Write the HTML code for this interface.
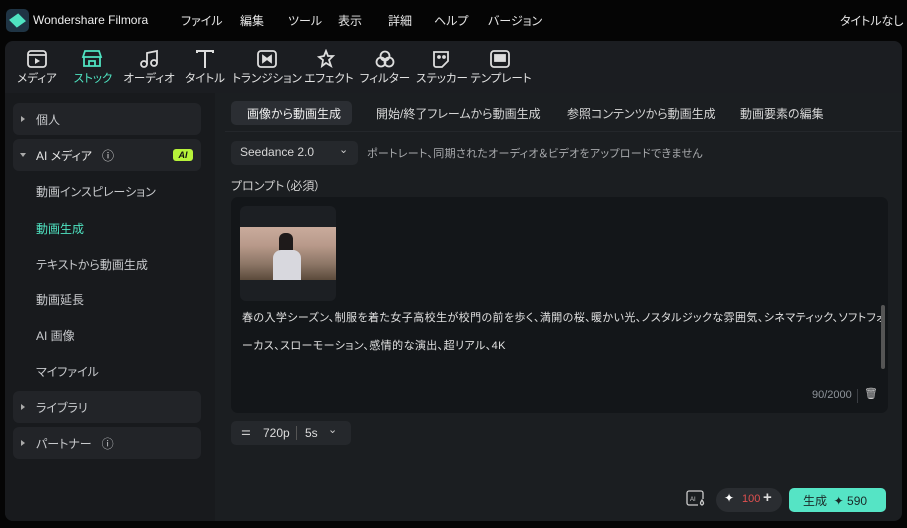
<!DOCTYPE html>
<html><head><meta charset="utf-8"><style>
*{box-sizing:border-box;margin:0;padding:0}
body{width:907px;height:528px;background:#050505;font-family:"Liberation Sans","Noto Sans CJK JP",sans-serif;color:#d0d2d6;font-size:12px;position:relative;overflow:hidden;font-feature-settings:"palt";white-space:nowrap}
.a{position:absolute}
.menu span{position:absolute;top:12px;font-size:12px;color:#e6e6e6}
.tb{position:absolute;left:5px;top:41px;width:897px;height:52px;background:#1b1d21;border-radius:8px 8px 0 0}
.ti{position:absolute;top:70px;font-size:11.5px;color:#e2e2e2;text-align:center;width:70px}
.ic{position:absolute;top:49px}
.body{position:absolute;left:5px;top:93px;width:897px;height:428px;background:#1b1e21;border-radius:0 0 8px 8px}
.side{position:absolute;left:5px;top:93px;width:210px;height:428px;background:#181a1d;border-radius:0 0 0 8px}
.grp{position:absolute;left:13px;width:188px;height:32px;background:#222428;border-radius:6px;font-size:12px;color:#c8cacd}
.grp i{position:absolute;left:8px;top:13px;border-left:4px solid #aaa;border-top:3px solid transparent;border-bottom:3px solid transparent}
.grp b{font-weight:normal;position:absolute;left:23px;top:8px}
.it{position:absolute;left:36px;font-size:12px;color:#c8cacd}
.tab{position:absolute;top:105px;font-size:12px;color:#d6d6d6}
</style></head><body>
<div class="a" style="left:6px;top:9px;width:23px;height:23px;background:#1f3444;border-radius:5px"></div>
<div class="a" style="left:12px;top:15px;width:11px;height:11px;background:#4fe3c1;transform:rotate(45deg) skewX(-10deg)"></div>
<div class="a" style="left:33px;top:13px;font-size:12px;color:#eee">Wondershare Filmora</div>
<div class="menu"><span style="left:181px">ファイル</span><span style="left:240px">編集</span><span style="left:288px">ツール</span><span style="left:338px">表示</span><span style="left:388px">詳細</span><span style="left:434px">ヘルプ</span><span style="left:488px">バージョン</span><span style="left:840px">タイトルなし</span></div>
<div class="tb"></div>
<svg class="ic" style="left:26px" width="22" height="20" viewBox="0 0 22 20" fill="none" stroke="#ddd" stroke-width="1.8"><rect x="2" y="2" width="18" height="16" rx="3"/><path d="M2 6h18"/><path d="M9 9l5 3-5 3z" fill="#ddd" stroke="none"/></svg>
<svg class="ic" style="left:81px" width="22" height="20" viewBox="0 0 22 20" fill="none" stroke="#4fe3c1" stroke-width="1.8"><path d="M3 8V17h16V8M2 8l2-6h14l2 6zM8 17v-5h6v5"/></svg>
<svg class="ic" style="left:138px" width="22" height="20" viewBox="0 0 22 20" fill="none" stroke="#ddd" stroke-width="1.8"><circle cx="6" cy="15" r="3"/><circle cx="16" cy="14" r="3"/><path d="M9 15V4l10-2v12"/></svg>
<svg class="ic" style="left:194px" width="22" height="20" viewBox="0 0 22 20" fill="none" stroke="#ddd" stroke-width="2"><path d="M3 4V2h16v2M11 2v17"/></svg>
<svg class="ic" style="left:256px" width="22" height="20" viewBox="0 0 22 20" fill="none" stroke="#ddd" stroke-width="1.8"><rect x="2" y="2" width="18" height="16" rx="3"/><path d="M7 7l4 3-4 3zM15 7l-4 3 4 3z" fill="#ddd"/></svg>
<svg class="ic" style="left:317px" width="22" height="20" viewBox="0 0 22 20" fill="none" stroke="#ddd" stroke-width="1.8"><path d="M9 2l2 5 5 0-4 4 2 6-5-3-4 3 1-6-4-3 5-1z"/></svg>
<svg class="ic" style="left:374px" width="22" height="20" viewBox="0 0 22 20" fill="none" stroke="#ddd" stroke-width="1.8"><circle cx="11" cy="7" r="4.5"/><circle cx="7" cy="13" r="4.5"/><circle cx="15" cy="13" r="4.5"/></svg>
<svg class="ic" style="left:430px" width="22" height="20" viewBox="0 0 22 20" fill="none" stroke="#ddd" stroke-width="1.8"><path d="M4 3h14v9l-6 6H6a2 2 0 0 1-2-2z"/><circle cx="9" cy="8" r="1" fill="#ddd"/><circle cx="14" cy="8" r="1" fill="#ddd"/></svg>
<svg class="ic" style="left:489px" width="22" height="20" viewBox="0 0 22 20" fill="none" stroke="#ddd" stroke-width="1.8"><rect x="2" y="2" width="18" height="16" rx="3"/><rect x="6" y="6" width="10" height="6" fill="#ddd"/></svg>
<div class="ti" style="left:2px">メディア</div>
<div class="ti" style="left:58px;color:#4fe3c1">ストック</div>
<div class="ti" style="left:114px">オーディオ</div>
<div class="ti" style="left:170px">タイトル</div>
<div class="ti" style="left:232px">トランジション</div>
<div class="ti" style="left:294px">エフェクト</div>
<div class="ti" style="left:350px">フィルター</div>
<div class="ti" style="left:407px">ステッカー</div>
<div class="ti" style="left:466px">テンプレート</div>
<div class="body"></div>
<div class="side"></div>
<div class="grp" style="top:103px"><i></i><b style="left:23px">個人</b></div>
<div class="grp" style="top:139px;height:32px"><i style="border-left:3px solid transparent;border-right:3px solid transparent;border-top:4px solid #aaa;border-bottom:0;top:14px;left:7px"></i><b style="color:#e4e4e4">AI メディア &nbsp; ⓘ</b><span class="a" style="left:160px;top:10px;width:20px;height:12px;background:#b7f23a;border-radius:3px;color:#111;font-size:9px;font-weight:bold;font-style:italic;text-align:center;line-height:12px">AI</span></div>
<div class="it" style="top:183px">動画インスピレーション</div>
<div class="it" style="top:220px;color:#4fe3c1">動画生成</div>
<div class="it" style="top:256px">テキストから動画生成</div>
<div class="it" style="top:291px">動画延長</div>
<div class="it" style="top:327px">AI 画像</div>
<div class="it" style="top:363px">マイファイル</div>
<div class="grp" style="top:391px"><i></i><b>ライブラリ</b></div>
<div class="grp" style="top:427px"><i></i><b>パートナー &nbsp; ⓘ</b></div>
<div class="a" style="left:231px;top:101px;width:121px;height:24px;background:#2b2e33;border-radius:5px"></div>
<div class="tab" style="left:247px;color:#f0f0f0">画像から動画生成</div>
<div class="tab" style="left:376px">開始/終了フレームから動画生成</div>
<div class="tab" style="left:567px">参照コンテンツから動画生成</div>
<div class="tab" style="left:740px">動画要素の編集</div>
<div class="a" style="left:225px;top:131px;width:677px;height:1px;background:#24272b"></div>
<div class="a" style="left:231px;top:141px;width:127px;height:24px;background:#25282c;border-radius:5px"></div>
<div class="a" style="left:240px;top:145px;color:#d6d6d6">Seedance 2.0</div>
<div class="a" style="left:339px;top:143px;color:#ccc;font-size:11px">⌄</div>
<div class="a" style="left:367px;top:145px;color:#a8aaad;font-size:11px;letter-spacing:0.3px">ポートレート、同期されたオーディオ＆ビデオをアップロードできません</div>
<div class="a" style="left:231px;top:177px;color:#d0d0d0">プロンプト（必須）</div>
<div class="a" style="left:231px;top:197px;width:657px;height:216px;background:#131619;border-radius:7px"></div>
<div class="a" style="left:240px;top:206px;width:96px;height:95px;background:#1c1f23;border-radius:6px"></div>
<div class="a" style="left:240px;top:227px;width:96px;height:53px;background:linear-gradient(180deg,#c9ab9c 0%,#b8998a 35%,#8c7666 70%,#5b4a3b 100%)"></div>
<div class="a" style="left:279px;top:233px;width:14px;height:20px;background:#1e1a1a;border-radius:6px 6px 2px 2px"></div>
<div class="a" style="left:273px;top:250px;width:28px;height:30px;background:#d8d8de;border-radius:8px 8px 0 0"></div>
<div class="a" style="left:242px;top:309px;color:#e0e0e0;font-size:11px;letter-spacing:0.42px">春の入学シーズン、制服を着た女子高校生が校門の前を歩く、満開の桜、暖かい光、ノスタルジックな雰囲気、シネマティック、ソフトフォ</div>
<div class="a" style="left:242px;top:337px;color:#e0e0e0;font-size:11px;letter-spacing:0.42px">ーカス、スローモーション、感情的な演出、超リアル、4K</div>
<div class="a" style="left:881px;top:305px;width:4px;height:64px;background:#555;border-radius:2px"></div>
<div class="a" style="left:812px;top:389px;color:#8e949a;font-size:11px">90/2000</div>
<div class="a" style="left:857px;top:389px;width:1px;height:14px;background:#3a3d42"></div>
<div class="a" style="left:864px;top:387px;color:#ccc;font-size:11px">🗑</div>
<div class="a" style="left:231px;top:421px;width:120px;height:24px;background:#25282c;border-radius:5px"></div>
<div class="a" style="left:241px;top:425px;color:#ccc;font-size:11px">⚌</div>
<div class="a" style="left:263px;top:426px;color:#ddd">720p</div>
<div class="a" style="left:296px;top:426px;width:1px;height:14px;background:#555"></div>
<div class="a" style="left:305px;top:426px;color:#ddd">5s</div>
<div class="a" style="left:328px;top:423px;color:#ccc;font-size:11px">⌄</div>
<svg class="a" style="left:686px;top:490px" width="20" height="18" viewBox="0 0 20 18" fill="none" stroke="#ccc" stroke-width="1.3"><path d="M12 15H3a2 2 0 0 1-2-2V3a2 2 0 0 1 2-2h12a2 2 0 0 1 2 2v6"/><text x="4" y="11" font-size="6" fill="#ccc" stroke="none" font-family="Liberation Sans">AI</text><path d="M16 10c-2 3-2 4 0 5 2-1 2-2 0-5z"/></svg>
<div class="a" style="left:716px;top:488px;width:66px;height:24px;background:#2a2d31;border-radius:12px"></div>
<div class="a" style="left:724px;top:491px;color:#fff;font-size:12px">✦</div>
<div class="a" style="left:742px;top:493px;color:#e05050;font-size:11px">100</div>
<div class="a" style="left:763px;top:489px;color:#ddd;font-size:15px;font-weight:bold">+</div>
<div class="a" style="left:789px;top:488px;width:97px;height:24px;background:#55e4c5;border-radius:5px"></div>
<div class="a" style="left:803px;top:492px;color:#1a2a28;font-size:12px">生成 &nbsp;✦ 590</div>
</body></html>
